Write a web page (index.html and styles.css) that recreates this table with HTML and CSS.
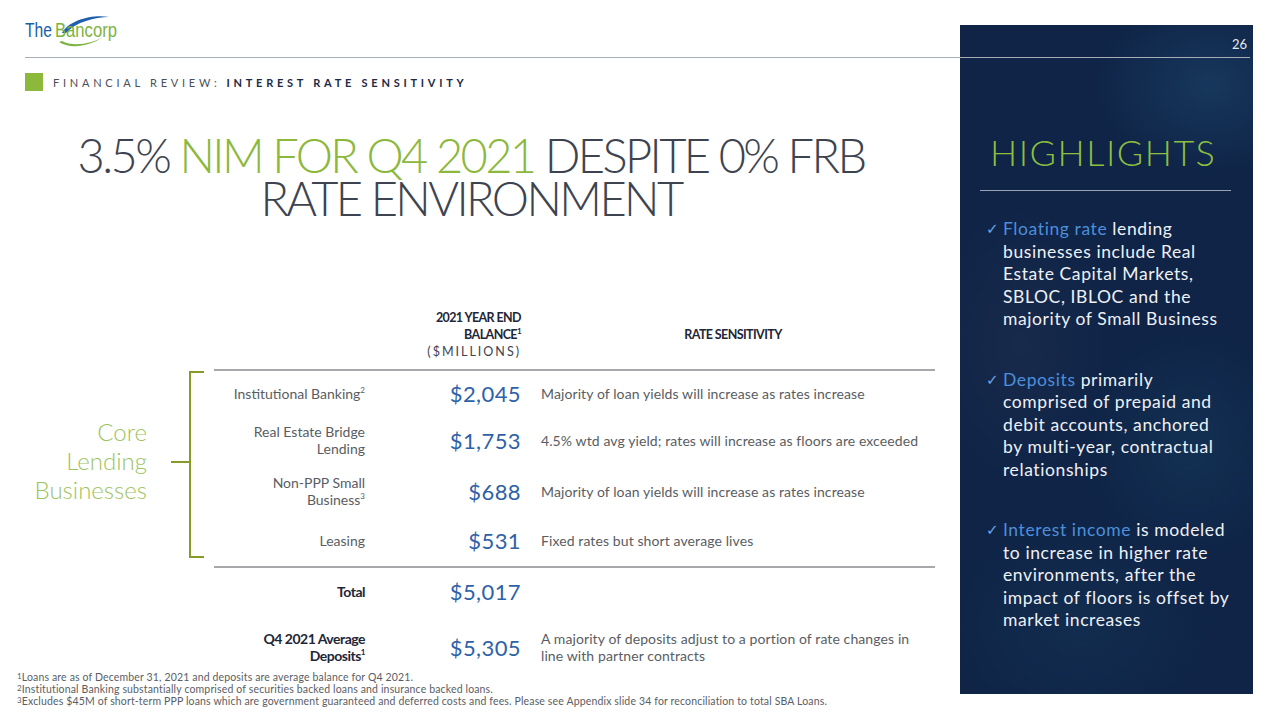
FILE: index.html
```html
<!DOCTYPE html>
<html>
<head>
<meta charset="utf-8">
<link rel="stylesheet" href="styles.css">
</head>
<body>
<div class="slide">
  <header class="topbar">
    <svg class="logo" width="110" height="40" viewBox="0 0 110 40">
      <path d="M40 22 C47 9 71 3 87 6 C73 6 54 11 44 22 Z" fill="#1f5fad"/>
      <text x="3" y="26" class="logo-the" textLength="27" lengthAdjust="spacingAndGlyphs">The</text>
      <text x="33" y="26" class="logo-ban" textLength="62" lengthAdjust="spacingAndGlyphs">Bancorp</text>
      <path d="M37 31 C47 38 67 36 81 26 C69 33 51 36 40 30 Z" fill="#7cb342"/>
    </svg>
    <span class="page-num">26</span>
  </header>

  <main class="main">
    <div class="section">
      <span class="sq"></span>
      <span class="sec-light">FINANCIAL REVIEW:</span>
      <span class="sec-bold">INTEREST RATE SENSITIVITY</span>
    </div>

    <h1 class="title"><span>3.5% </span><span class="green">NIM FOR Q4 2021</span> DESPITE 0% FRB<br>RATE ENVIRONMENT</h1>

    <section class="table">
      <div class="thead">
        <div class="th-bal">2021 YEAR END<br>BALANCE<sup>1</sup><br><span class="mil">($MILLIONS)</span></div>
        <div class="th-rate">RATE SENSITIVITY</div>
      </div>

      <div class="core">
        <div class="side">
          <div class="core-label">Core<br>Lending<br>Businesses</div>
          <div class="tick"></div>
          <div class="bracket"></div>
        </div>
        <div class="rows">
          <div class="row r1">
            <div class="lbl">Institutional Banking<sup>2</sup></div>
            <div class="amt">$2,045</div>
            <div class="desc">Majority of loan yields will increase as rates increase</div>
          </div>
          <div class="row r2">
            <div class="lbl">Real Estate Bridge<br>Lending</div>
            <div class="amt">$1,753</div>
            <div class="desc">4.5% wtd avg yield; rates will increase as floors are exceeded</div>
          </div>
          <div class="row r3">
            <div class="lbl">Non-PPP Small<br>Business<sup>3</sup></div>
            <div class="amt">$688</div>
            <div class="desc">Majority of loan yields will increase as rates increase</div>
          </div>
          <div class="row r4">
            <div class="lbl">Leasing</div>
            <div class="amt">$531</div>
            <div class="desc">Fixed rates but short average lives</div>
          </div>
        </div>
      </div>

      <div class="totals">
        <div class="row t1">
          <div class="lbl bold">Total</div>
          <div class="amt">$5,017</div>
          <div class="desc"></div>
        </div>
        <div class="row t2">
          <div class="lbl bold">Q4 2021 Average<br>Deposits<sup>1</sup></div>
          <div class="amt">$5,305</div>
          <div class="desc">A majority of deposits adjust to a portion of rate changes in<br>line with partner contracts</div>
        </div>
      </div>
    </section>

    <footer class="notes">
      <p><sup>1</sup>Loans are as of December 31, 2021 and deposits are average balance for Q4 2021.</p>
      <p><sup>2</sup>Institutional Banking substantially comprised of securities backed loans and insurance backed loans.</p>
      <p><sup>3</sup>Excludes $45M of short-term PPP loans which are government guaranteed and deferred costs and fees. Please see Appendix slide 34 for reconciliation to total SBA Loans.</p>
    </footer>
  </main>

  <aside class="panel">
    <h2 class="hl">HIGHLIGHTS</h2>
    <ul class="bullets">
      <li><span class="chk">✓</span><span class="btxt"><em>Floating rate</em> lending<br>businesses include Real<br>Estate Capital Markets,<br>SBLOC, IBLOC and the<br>majority of Small Business</span></li>
      <li><span class="chk">✓</span><span class="btxt"><em>Deposits</em> primarily<br>comprised of prepaid and<br>debit accounts, anchored<br>by multi-year, contractual<br>relationships</span></li>
      <li><span class="chk">✓</span><span class="btxt"><em>Interest income</em> is modeled<br>to increase in higher rate<br>environments, after the<br>impact of floors is offset by<br>market increases</span></li>
    </ul>
  </aside>
</div>
</body>
</html>
```

FILE: styles.css
```css
html, body {
  margin: 0;
  padding: 0;
  background: #ffffff;
}

.slide {
  width: 1280px;
  height: 720px;
  display: grid;
  grid-template-columns: 960px 293px 27px;
  grid-template-rows: 58px 1fr 26px;
  font-family: Lato, "Liberation Sans", sans-serif;
  overflow: hidden;
}

/* top bar */
.topbar {
  grid-column: 1 / 3;
  grid-row: 1;
  margin-left: 25px;
  margin-right: 3px;
  border-bottom: 1px solid #a8adb4;
  display: flex;
  justify-content: space-between;
  align-items: flex-end;
  position: relative;
  z-index: 2;
}

.logo {
  display: block;
  margin-left: -3px;
  margin-bottom: 6px;
}

.logo-the {
  font-family: "Liberation Sans", Arial, sans-serif;
  font-size: 20px;
  fill: #1b5ea6;
}

.logo-ban {
  font-family: "Liberation Sans", Arial, sans-serif;
  font-size: 20px;
  fill: #7cb342;
}

.page-num {
  font-size: 13px;
  color: #e6e9ee;
  padding-right: 3px;
  padding-bottom: 5px;
}

/* main column */
.main {
  grid-column: 1;
  grid-row: 2 / 4;
  display: flex;
  flex-direction: column;
}

.section {
  margin-top: 15px;
  padding-left: 25px;
  display: flex;
  align-items: center;
  height: 18px;
  font-size: 11px;
  letter-spacing: 3.75px;
}

.sq {
  width: 18px;
  height: 18px;
  background: #8cb83c;
  margin-right: 10px;
}

.sec-light {
  color: #4a4f58;
  margin-right: 6px;
}

.sec-bold {
  color: #1d2a45;
  font-weight: 700;
}

.title {
  margin: 43px 18px 0 0;
  text-align: center;
  font-weight: 300;
  font-size: 47px;
  line-height: 43px;
  letter-spacing: -2.6px;
  color: #3d4450;
}

.title .green {
  color: #8cb83c;
}

/* table */
.table {
  margin-top: 89px;
}

.thead {
  margin-left: 214px;
  width: 721px;
  display: grid;
  grid-template-columns: 151px 156px 414px;
  align-items: center;
  padding-bottom: 9px;
}

.th-bal {
  grid-column: 2;
  text-align: right;
  font-weight: 700;
  font-size: 12.5px;
  line-height: 17px;
  letter-spacing: -0.6px;
  color: #1e2638;
}

.th-bal sup {
  font-size: 8px;
  vertical-align: top;
  line-height: 10px;
}

.mil {
  font-weight: 400;
  letter-spacing: 2px;
  color: #3c4250;
}

.th-rate {
  grid-column: 3;
  text-align: center;
  padding-left: 10px;
  font-weight: 700;
  font-size: 12.5px;
  letter-spacing: -0.6px;
  color: #1e2638;
}

.core {
  display: flex;
}

.side {
  width: 214px;
  display: flex;
  align-items: flex-start;
}

.core-label {
  width: 147px;
  margin-top: 48px;
  text-align: right;
  font-weight: 300;
  font-size: 24px;
  line-height: 29px;
  color: #9cc35c;
}

.tick {
  width: 18px;
  margin-left: 24px;
  margin-top: 92px;
  border-top: 2px solid #8a9a26;
}

.bracket {
  width: 13px;
  height: 183px;
  margin-top: 2px;
  border: 2px solid #8a9a26;
  border-right: none;
}

.rows {
  width: 721px;
  border-top: 2px solid #a6a8ab;
  border-bottom: 2px solid #a6a8ab;
  padding-bottom: 3px;
  display: grid;
  grid-template-rows: 44px 50px 52px 46px;
}

.row {
  display: grid;
  grid-template-columns: 151px 156px 414px;
  align-items: center;
}

.lbl {
  text-align: right;
  font-size: 14px;
  line-height: 17px;
  color: #595d63;
}

.lbl sup, .notes sup {
  font-size: 8px;
  vertical-align: top;
  line-height: 10px;
}

.lbl.bold {
  font-weight: 700;
  color: #1e2638;
  letter-spacing: -0.5px;
}

.amt {
  text-align: right;
  font-size: 22px;
  letter-spacing: 0.4px;
  color: #2d62a8;
}

.desc {
  padding-left: 20px;
  font-size: 14px;
  line-height: 17px;
  letter-spacing: 0.1px;
  color: #595d63;
}

.totals {
  margin-left: 214px;
  width: 721px;
  display: grid;
  grid-template-rows: 46px 52px;
  row-gap: 7px;
}

.notes {
  padding-left: 17px;
  margin-top: -2px;
  font-size: 10.5px;
  line-height: 12px;
  color: #5a5e64;
  letter-spacing: 0.15px;
}

.notes p {
  margin: 0;
  white-space: nowrap;
}

/* highlights panel */
.panel {
  grid-column: 2;
  grid-row: 1 / 3;
  margin-top: 25px;
  padding: 109px 22px 0 20px;
  background:
    radial-gradient(ellipse 120px 90px at 250px 60px, rgba(40, 100, 140, 0.30), transparent),
    radial-gradient(ellipse 90px 140px at 60px 320px, rgba(50, 60, 90, 0.25), transparent),
    radial-gradient(ellipse 110px 120px at 230px 420px, rgba(30, 90, 120, 0.22), transparent),
    radial-gradient(ellipse 140px 110px at 120px 600px, rgba(30, 80, 110, 0.20), transparent),
    #0f2447;
  color: #eef1f5;
}

.hl {
  margin: 0;
  font-weight: 300;
  font-size: 36px;
  line-height: 37px;
  letter-spacing: 1.5px;
  color: #8cbf3f;
  padding-left: 10px;
  padding-bottom: 19px;
  border-bottom: 1px solid #9aa3b1;
}

.bullets {
  list-style: none;
  margin: 27px 0 0 0;
  padding: 0 0 0 6px;
}

.bullets li {
  display: flex;
  font-size: 17.5px;
  line-height: 22.5px;
  margin-bottom: 38px;
}

.btxt {
  letter-spacing: 0.6px;
  white-space: nowrap;
}

.chk {
  width: 17px;
  flex: none;
  font-family: "DejaVu Sans", sans-serif;
  font-size: 15px;
  color: #6ba5e2;
}

.bullets em {
  font-style: normal;
  color: #4d8fdb;
}
```
